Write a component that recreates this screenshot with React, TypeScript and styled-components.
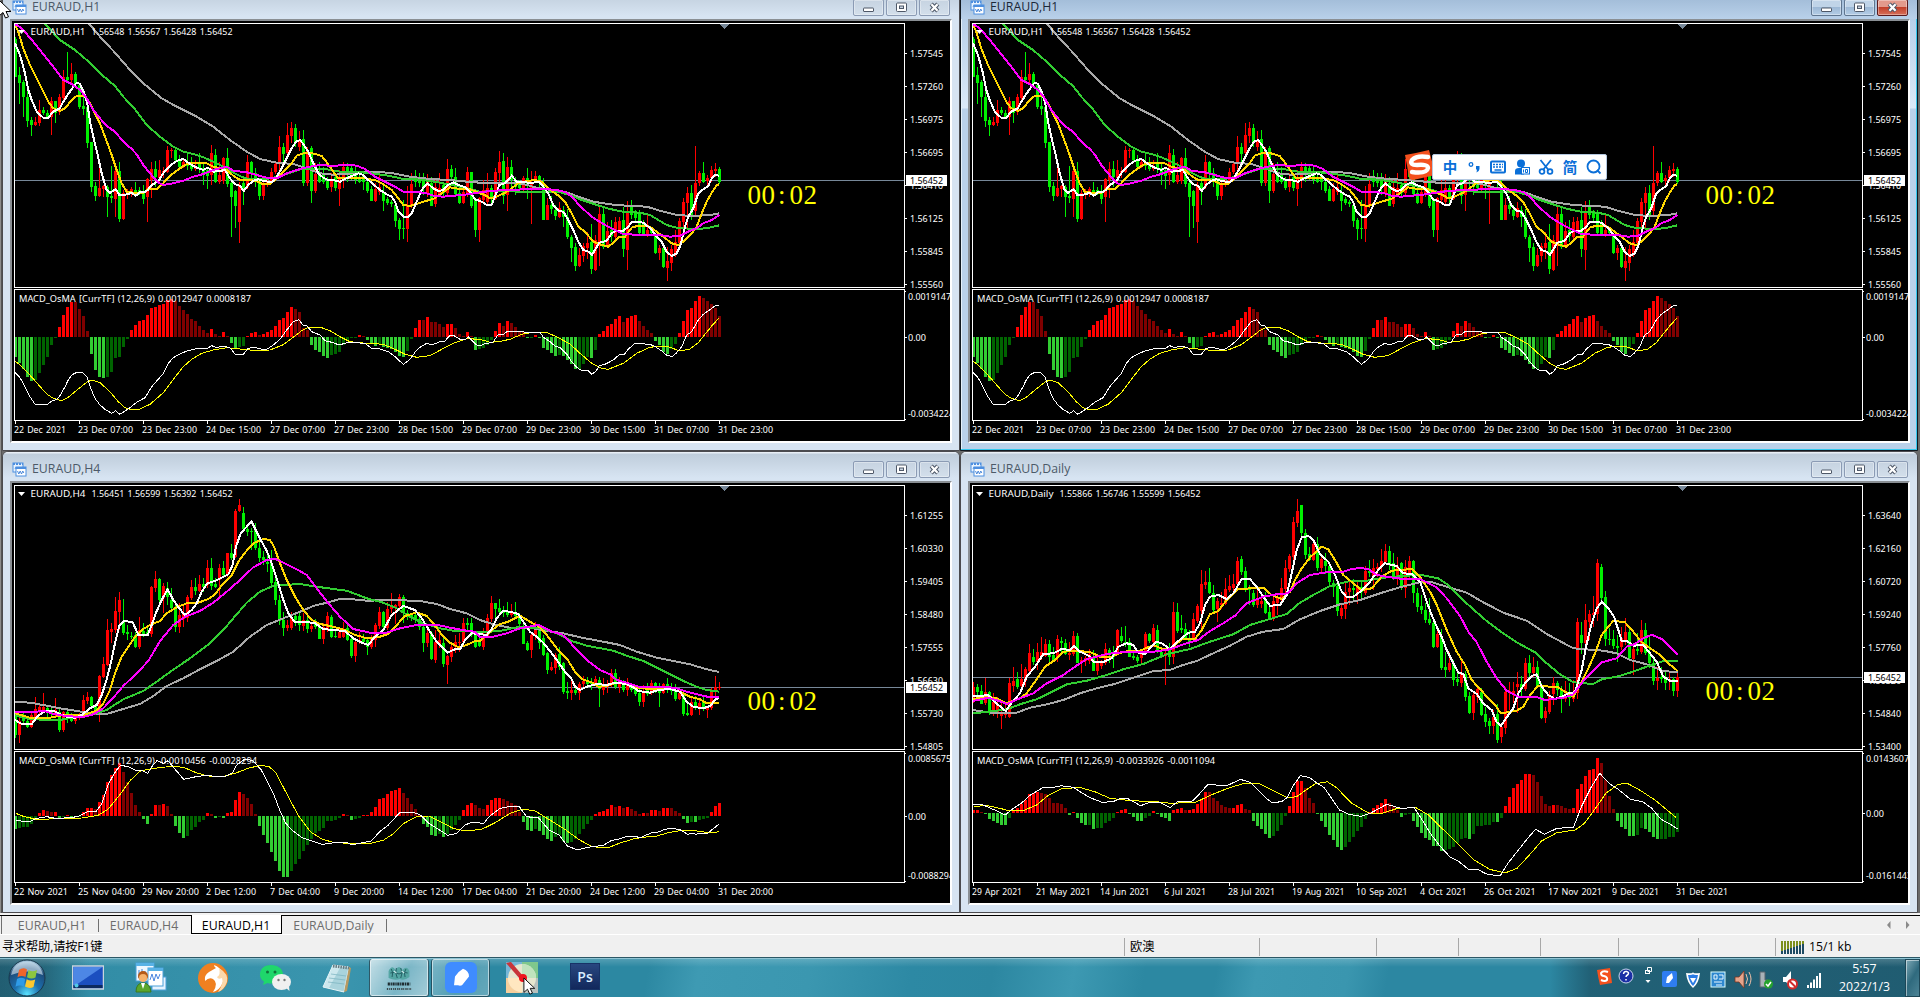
import React from 'react';
import styled, { createGlobalStyle, css } from 'styled-components';

/* ------------------------------------------------------------------ */
/* Chart data. Coordinates are stored in thirds of a pixel.            */
/* ------------------------------------------------------------------ */

/** One stretch of a line: x offset, x scale, then "x,y x,y ..." */
type Piece = [number, number, string];

interface Curve {
  color: string;
  width: number;
  pieces: Piece[];
}

interface ChartData {
  symbol: string;
  header: string;
  headerWidth: number;
  candles: string;
  yBase: number;
  curves: Curve[];
  osma: string;
  osmaZero: number;
  osmaBase: number;
  osmaLabel: string;
  osmaLabelWidth: number;
  osmaCurves: Curve[];
  prices: string[];
  priceY: number;
  timerY: number;
  osmaTop: string;
  osmaBottom: string;
  times: string[];
}

const GRAY = '#a9a9a9';
const GREEN = '#32cd32';
const MAGENTA = '#ff00ff';
const GOLD = '#ffd700';
const WHITE = '#ffffff';
const YELLOW = '#ffff00';

const line = (color: string, width: number, ...pieces: Piece[]): Curve => ({ color, width, pieces });

const H1: ChartData = {
  symbol: 'EURAUD,H1',
  header: '1.56548 1.56567 1.56428 1.56452',
  headerWidth: 141,
  yBase: 72,
  candles:
    'g110,118,230,232 g200,225,248,312 g240,247,290,352 g245,290,362,380 g350,360,375,408 r352,366,375,378 r300,330,368,378 g322,330,338,345 g330,338,350,357 r290,303,352,405 ' +
    'g302,304,338,370 r283,290,335,345 r210,232,293,300 g156,230,240,245 r188,222,240,250 g215,222,252,258 g250,255,320,328 g280,318,328,345 g295,322,430,445 g425,427,560,577 ' +
    'g545,558,587,602 r500,563,588,592 r556,558,568,590 g555,560,592,650 g498,588,594,608 r508,514,596,650 g485,514,656,665 r570,578,657,660 r566,575,582,598 r560,568,580,590 ' +
    'g545,570,580,590 g560,570,578,585 g555,575,596,612 r535,538,592,665 r485,508,540,593 g483,508,532,560 r480,510,535,545 r500,512,520,535 r438,450,515,520 r445,450,454,473 ' +
    'g445,450,480,490 g465,480,500,510 r475,485,498,505 g460,485,498,510 g470,495,506,512 r480,500,508,514 g460,490,508,518 g490,505,518,555 g500,510,528,567 r435,460,525,555 ' +
    'g447,464,545,550 r485,525,545,552 r470,475,542,552 g444,473,552,562 g540,550,590,711 g570,574,618,684 r545,556,665,729 g540,550,566,615 r465,487,560,567 g483,487,520,540 ' +
    'g505,518,545,560 g535,540,587,600 r540,552,588,600 r535,545,556,560 r505,515,545,552 r485,492,515,523 r408,440,492,515 g428,440,462,490 r369,405,460,470 r366,383,408,430 ' +
    'g372,383,425,440 r393,420,440,452 g390,418,548,558 r440,450,548,558 g437,444,573,608 r490,521,573,580 g485,518,545,550 g500,520,545,552 g530,542,565,570 r520,538,562,575 ' +
    'g520,530,565,572 r510,530,566,618 r485,500,540,565 g490,500,525,545 g497,505,530,540 g500,515,540,552 g520,530,545,550 g515,525,545,570 g535,545,572,578 g558,567,602,603 ' +
    'r550,567,603,607 r525,560,575,585 g555,575,602,633 g590,598,610,615 g600,605,612,620 g608,615,663,680 g655,660,687,720 g600,684,687,717 r557,618,687,726 r518,552,618,625 ' +
    'g510,538,545,560 g518,538,550,560 g520,535,560,585 r523,537,583,590 g530,550,617,618 r540,560,612,621 r520,563,583,590 g545,555,580,587 r477,507,578,590 g495,507,530,540 ' +
    'g503,530,583,590 g555,580,610,612 r565,576,610,612 r500,516,578,592 g515,517,618,625 g595,600,690,711 r590,595,690,726 r540,570,600,612 r518,565,605,615 g555,565,595,610 ' +
    'r505,516,598,600 r452,485,518,555 g458,483,588,612 r470,500,585,633 g480,500,540,560 g530,540,560,585 g540,548,565,572 r528,535,570,575 g503,533,555,597 r512,545,565,672 ' +
    'r513,528,540,550 g525,528,548,560 g535,555,660,660 r593,615,660,660 g588,615,627,642 g615,630,648,660 r605,625,650,655 g618,630,650,680 g628,650,710,718 g706,710,745,787 ' +
    'g730,742,798,812 r745,765,798,802 r730,737,768,787 r697,728,745,777 g672,725,808,822 r705,720,810,812 r618,643,738,797 g625,643,740,748 r665,692,735,740 g660,690,708,725 ' +
    'r650,666,710,720 r652,663,690,695 g620,660,748,771 r603,640,750,810 g600,620,645,658 g630,640,655,665 g630,640,700,708 g660,670,702,708 r645,690,708,712 g680,690,700,705 ' +
    'g698,705,758,763 r735,745,758,780 g735,745,800,804 r740,783,803,843 r735,748,788,812 r690,725,760,770 r655,663,730,745 r595,606,667,690 r560,580,608,690 g555,580,650,660 ' +
    'r438,550,632,650 r513,519,550,558 g487,519,545,550 r525,535,543,560 r497,510,535,545 r488,508,514,530 g500,507,545,552',
  curves: [
    line(GRAY, 2,
      [0, 1, '266,70 300,110 345,158 390,210 430,250 485,295 530,320 590,350 640,380 690,420 740,455 780,477 830,488 880,492 920,505 960,520 1000,524 1040,522 1070,517 1130,515 1180,520 1230,530 1290,537 1350,540 1400,545'],
      [1440, 1, '0,548 100,548 130,552 170,563 200,568 260,577 300,592 340,605 390,613 440,617 500,620 540,632 590,645 640,648 690,645 718,640']),
    line(GREEN, 2,
      [0, 1, '132,70 150,88 180,120 225,150 260,180 300,220 345,258 370,290 405,328 440,375 480,410 520,440 550,455 580,462 610,472 640,485 670,500 700,518 735,535 760,537 800,537 835,530 870,518 900,508 940,507 980,508 1020,515 1060,515 1100,518 1130,522 1170,528 1210,537 1250,538 1290,543 1330,550 1370,558 1410,567'],
      [1440, 1, '0,575 60,573 120,575 180,575 240,577 270,585 300,598 330,608 360,618 390,627 430,635 480,638 510,645 530,657 560,675 590,683 640,687 680,685 718,676']),
    line(GOLD, 2,
      [0, 1, '45,75 55,95 70,145 90,195 110,235 125,265 145,305 160,325 180,333 195,325 215,300 230,288 255,288 270,310 285,340 300,370 315,410 335,465 350,510 365,550 380,575 400,578 430,578 445,567 470,567 490,550 505,532 520,520 540,505 560,492 590,488 620,490 640,500 660,505 680,510 700,527 720,540 745,540 770,543 790,553 810,553 830,535 845,520 860,505 875,490 890,467 910,460 930,458 950,463 965,468 980,487 1000,515 1015,535 1040,535 1060,533 1085,533 1110,538 1130,542 1150,553 1175,570 1195,595 1210,615 1230,618 1255,610 1280,602 1300,597 1325,580 1350,562 1380,567 1410,568'],
      [1440, 1, '0,580 15,585 30,595 50,590 75,578 95,565 115,550 140,543 165,540 185,545 205,565 225,580 240,590 255,605 275,640 295,680 315,695 340,725 365,735 385,740 400,728 415,712 435,710 455,683 475,677 495,678 510,680 530,695 550,710 575,730 595,735 610,725 635,700 650,680 665,640 680,605 695,578 710,555 718,553']),
    line(WHITE, 2,
      [0, 1, '45,130 60,165 75,220 85,270 95,300 110,335 130,353 145,353 160,335 180,325 190,305 205,282 220,260 230,248 240,252 252,278 262,310 270,365 280,410 292,460 305,520 320,570 330,578 347,568 358,585 370,585 382,583 395,578 407,587 420,577 432,577 443,570 455,555 467,548 479,537 491,518 505,503 515,493 530,483 550,477 570,492 590,503 610,510 623,503 640,515 660,513 675,510 690,535 705,553 720,557 731,573 745,555 760,542 775,538 790,543 805,545 818,545 830,530 845,505 860,475 875,445 888,425 900,420 912,435 925,455 940,490 955,520 970,533 985,540 1000,540 1020,545 1035,537 1055,528 1075,520 1090,525 1105,540 1120,553 1140,570 1160,583 1175,590 1185,605 1195,635 1210,650 1222,652 1235,640 1250,605 1265,570 1282,550 1300,565 1315,573 1330,570 1345,555 1360,547 1375,555 1395,562 1410,575 1425,598'],
      [1440, 1, '5,605 20,615 35,614 45,590 58,555 75,550 95,527 110,545 130,545 150,550 175,545 190,560 205,580 220,615 235,632 250,635 265,660 280,690 295,725 310,750 325,755 335,765 345,750 358,728 380,722 395,700 410,692 430,692 445,680 455,667 470,665 490,668 505,680 515,690 530,710 545,725 560,755 575,768 590,760 600,740 607,715 615,680 625,650 640,625 655,580 670,568 685,558 695,535 705,525 718,527']),
    line(MAGENTA, 2,
      [0, 1, '45,72 65,85 100,125 130,163 160,200 190,240 215,252 240,270 260,295 280,330 300,355 320,378 345,395 370,425 395,447 410,463 430,495 450,520 475,548 490,555 520,550 550,542 580,530 610,522 640,510 680,500 700,512 740,517 770,525 800,533 830,535 860,520 890,510 920,502 960,495 1000,498 1040,494 1070,497 1095,507 1125,530 1155,545 1185,560 1210,575 1250,577 1275,578 1300,587 1330,590 1360,587 1385,585 1410,582'],
      [1440, 1, '0,577 40,572 90,570 150,567 200,567 240,572 260,578 280,595 300,618 335,650 370,672 400,688 430,702 480,705 540,705 570,710 600,707 620,697 650,685 670,670 695,660 718,645']),
  ],
  osmaZero: 47,
  osmaBase: 30,
  osma:
    '-60 -77 -96 -120 -132 -129 -108 -84 -60 -24 -3 30 66 90 105 104 84 63 18 -51 -99 -120 -123 -120 -105 -63 -60 -30 -6 21 36 48 51 66 87 90 96 99 111 114 108 93 81 69 54 48 33 21 12 24 9 3 15 3 -17 -34 -30 -27 3 12 15 6 9 15 21 33 51 57 75 90 84 75 27 21 -24 -39 -45 -57 -63 -54 -51 -45 -24 -12 -3 -3 6 3 -9 -21 -27 -21 -29 -33 -36 -45 -57 -60 -42 -6 27 51 50 60 45 44 39 30 39 39.5 27 9 3 15 3 -39 -36 -33 -24 -9 18 42 33 48 42 30 18 15 -3 -3 6 -2 -33 -39 -48 -57 -54 -57 -69 -81 -96 -95 -81 -60 -63 -39 9 18 33 39 54 63 45 57 63 66 48 33 21 12 -12 -24 -45 -51 -36 -21 12 48 81 87 108 123 117 108 99 87 63',
  osmaLabel: '0.0012947 0.0008187',
  osmaLabelWidth: 232,
  osmaCurves: [
    line(YELLOW, 1,
      [0, 1, '45,243 60,255 85,280 110,308 140,342 160,355 185,362 205,352 235,327 262,305 278,300 300,308 330,335 355,365 375,383 395,390 420,387 450,373 490,338 520,298 550,260 575,238 605,220 640,210 680,203 720,207 760,211 810,210 850,194 880,172 905,152 925,142 965,143 990,152 1020,170 1050,185 1090,189 1150,193 1185,208 1215,223 1250,232 1290,227 1325,208 1360,190 1400,176'],
      [1440, 1, '0,178 30,187 55,185 90,178 125,163 160,157 200,157 235,173 270,192 300,220 335,250 365,265 385,268 430,250 470,220 505,204 530,198 565,200 600,213 630,207 655,188 675,163 695,138 718,113']),
    line(WHITE, 1,
      [0, 1, '45,278 60,293 75,320 90,350 105,373 142,373 155,363 170,358 180,347 195,320 205,300 215,285 230,277 248,278 262,292 272,325 285,355 300,375 315,388 335,400 347,392 359,403 375,393 390,383 410,367 435,353 455,320 470,303 488,283 505,250 520,233 540,222 560,213 590,206 620,206 635,197 650,203 670,198 690,203 705,222 730,223 745,205 765,202 785,208 800,208 820,195 840,178 860,150 880,125 897,119 908,135 920,137 935,155 960,165 975,182 995,187 1018,195 1040,188 1065,188 1095,190 1115,205 1140,207 1165,215 1185,230 1210,253 1230,238 1245,217 1258,203 1280,190 1295,195 1320,185 1335,183 1348,168 1362,167 1380,178 1395,180 1405,170 1420,185 1430,195'],
      [1440, 1, '0,197 18,190 38,188 55,163 70,163 82,154 125,154 145,159 165,156 180,156 190,172 210,185 225,198 240,203 262,225 275,245 290,262 305,272 323,270 335,283 348,273 358,257 375,253 400,240 420,222 432,224 445,208 462,192 490,191 520,196 545,213 562,227 578,229 590,218 605,200 620,165 635,155 655,120 670,103 690,89 708,76 718,76']),
  ],
  prices: ['1.57545', '1.57260', '1.56975', '1.56695', '1.56410', '1.56125', '1.55845', '1.55560'],
  priceY: 156,
  timerY: 180,
  osmaTop: '0.0019147',
  osmaBottom: '-0.0034224',
  times: ['22 Dec 2021', '23 Dec 07:00', '23 Dec 23:00', '24 Dec 15:00', '27 Dec 07:00', '27 Dec 23:00', '28 Dec 15:00', '29 Dec 07:00', '29 Dec 23:00', '30 Dec 15:00', '31 Dec 07:00', '31 Dec 23:00'],
};

const H4: ChartData = {
  symbol: 'EURAUD,H4',
  header: '1.56451 1.56599 1.56392 1.56452',
  headerWidth: 141,
  yBase: 18,
  candles:
    'g700,705,765,773 r705,722,765,789 g700,715,722,735 g712,722,740,743 r698,705,740,743 r650,688,710,718 r675,680,690,705 r640,682,690,700 g680,685,700,715 g685,692,700,712 ' +
    'r655,690,705,712 g680,695,750,755 r693,697,750,755 g683,697,715,728 g700,705,722,725 r705,712,722,732 r700,706,715,720 r645,660,700,705 r636,650,662,672 g648,652,678,685 ' +
    'g672,676,690,705 r585,588,690,725 r530,552,590,595 r418,450,555,557 r430,447,455,490 r350,393,450,458 r336,360,395,450 g357,425,458,465 g435,455,462,480 g455,467,472,478 ' +
    'g455,465,500,505 r410,450,500,507 g430,452,462,470 g445,455,463,468 r318,322,462,470 r273,297,323,335 g295,297,360,365 r308,318,355,400 g305,323,350,375 g325,360,385,390 ' +
    'g370,383,440,455 r370,405,440,460 r375,400,418,440 r345,350,415,425 r300,322,353,360 g295,320,333,345 r285,312,333,337 g295,312,320,335 r240,264,315,325 g235,264,318,330 ' +
    'g295,313,320,325 r252,265,300,350 g242,265,285,295 r218,220,285,290 g192,219,233,240 r88,92,230,235 r57,76,93,97 g82,98,148,155 g140,148,155,168 g145,152,156,210 ' +
    'g128,150,203,210 g180,203,235,245 g212,230,240,255 g225,245,252,275 g210,248,308,315 g295,305,360,375 g345,360,423,435 g395,420,445,467 r420,435,443,453 r395,410,443,450 ' +
    'g400,408,420,438 g393,407,435,453 r400,420,437,452 g410,420,447,460 r430,438,447,455 g418,432,440,448 g432,440,476,478 r430,440,477,492 r397,408,450,455 g405,410,470,475 ' +
    'g450,468,472,475 r448,455,473,475 r425,450,470,475 g436,445,480,482 g470,478,528,533 r475,485,528,545 r455,480,487,492 g462,478,487,490 g470,480,500,525 r465,475,502,507 ' +
    'r430,435,480,500 r380,395,438,448 g393,395,440,450 r365,388,445,450 r340,380,388,400 r372,376,385,432 r342,350,378,390 g346,350,400,430 g390,400,408,420 g398,405,412,422 ' +
    'g388,405,418,430 g395,418,440,450 g425,440,488,515 r440,460,488,500 g453,460,538,540 r450,487,540,548 r450,480,492,505 g475,490,552,560 r525,528,555,612 r490,500,530,545 ' +
    'r465,487,500,520 r458,485,490,515 r415,428,487,495 g413,430,435,455 g415,430,465,470 g455,463,500,505 g475,485,498,500 r445,470,500,510 r403,415,470,475 r348,370,418,425 ' +
    'g370,370,388,418 g358,385,397,405 g378,390,400,410 g367,393,405,410 r372,395,405,410 g366,395,408,412 g400,405,432,450 g430,440,492,493 g483,488,510,513 r455,465,510,533 ' +
    'r425,445,465,480 g435,448,490,508 g465,475,525,527 g515,520,570,581 r545,562,570,572 r518,525,563,581 g500,523,560,570 g545,550,635,642 g605,632,638,656 r600,630,640,660 ' +
    'g623,630,640,645 r605,612,638,660 r588,602,613,628 g590,605,612,622 g595,605,613,630 r588,598,613,618 g590,600,628,681 r595,622,630,645 r600,612,622,640 r567,578,612,620 ' +
    'g567,578,622,628 r590,610,622,640 g600,610,630,637 r595,615,630,648 g608,612,630,635 g615,625,642,648 g625,638,665,678 r615,640,665,681 g610,630,643,648 r600,608,640,645 ' +
    'g605,610,625,640 g610,630,640,681 r610,612,640,643 g593,612,630,640 g610,620,632,645 g612,630,658,663 r630,640,658,660 g635,645,702,707 g670,700,706,708 r655,665,705,707 ' +
    'g648,665,685,690 r655,668,685,705 g645,665,688,692 r680,685,690,714 r625,630,685,690 r588,622,632,650 r605,620,624,630',
  curves: [
    line(GRAY, 2,
      [0, 1, '45,665 90,668 130,675 180,685 230,693 270,700 320,702 370,687 420,672 460,648 500,618 550,595 600,568 650,543 700,515 750,470 800,435 850,415 900,395 940,378 980,368 1020,357 1060,358 1100,362 1180,360 1260,363 1310,372 1350,387 1400,400'],
      [1440, 1, '0,420 40,433 90,443 150,443 200,453 250,460 300,472 370,485 420,495 470,515 530,533 580,543 630,553 680,568 718,576']),
    line(GREEN, 2,
      [0, 1, '45,706 90,718 180,720 220,712 290,700 320,690 370,658 430,633 470,605 515,572 570,535 630,490 670,450 700,415 740,368 780,335 820,317 900,312 950,320 1000,327 1040,332 1100,355 1150,368 1190,385 1230,410 1270,430 1320,445 1360,452 1400,452'],
      [1440, 1, '0,457 60,453 110,442 180,443 230,460 275,483 320,497 400,512 440,527 490,543 530,563 570,583 610,603 650,620 680,630 718,635']),
    line(GOLD, 2,
      [0, 1, '45,700 90,713 140,715 190,705 250,705 290,692 310,670 330,630 345,580 365,530 385,500 405,470 425,450 450,435 480,423 500,400 530,382 565,368 595,368 625,357 645,343 670,310 695,285 715,245 735,218 760,190 790,177 810,180 822,200 840,250 860,300 885,350 910,390 935,420 960,432 1000,440 1035,450 1060,463 1100,475 1140,470 1165,462 1190,435 1215,408 1250,397 1280,408 1300,430 1330,470 1350,488 1375,502 1400,495 1425,483'],
      [1440, 1, '0,483 20,465 40,447 60,432 85,425 120,407 150,425 180,442 200,465 230,505 260,535 285,575 305,597 335,607 355,620 380,618 410,608 440,612 480,625 530,627 570,627 600,635 630,650 660,658 680,670 718,668']),
    line(WHITE, 2,
      [0, 1, '45,720 65,732 95,733 110,712 130,695 160,692 180,702 200,710 225,713 245,705 270,685 290,675 305,645 318,605 330,560 345,490 358,438 372,422 398,427 415,465 443,465 455,435 467,400 485,360 503,328 520,360 540,388 555,405 575,390 590,370 605,335 622,310 645,303 665,293 685,283 697,258 708,200 722,160 740,140 755,125 770,155 785,185 800,212 815,250 835,310 850,360 865,400 885,427 915,425 945,430 970,447 1000,450 1035,453 1060,475 1085,488 1105,495 1125,470 1150,450 1175,405 1210,378 1245,390 1265,415 1290,455 1310,485 1342,518 1365,508 1380,508 1395,480 1415,460'],
      [1440, 1, '0,462 20,465 35,447 50,415 68,393 90,395 115,402 130,425 150,455 170,470 190,488 210,513 230,540 255,575 272,592 285,620 300,630 320,620 350,612 380,615 405,608 440,612 460,622 475,633 510,638 535,630 570,627 600,635 620,665 640,680 670,685 690,678 705,660 718,652']),
    line(MAGENTA, 2,
      [0, 1, '45,695 100,697 130,692 160,702 200,708 245,712 280,703 310,685 340,653 370,618 410,580 445,543 480,483 520,435 555,410 600,393 640,368 680,335 720,300 760,262 800,240 825,236 850,248 890,268 920,285 950,325 985,370 1020,410 1060,447 1110,458 1160,458 1200,445 1250,435 1310,434 1350,443 1400,452 1425,455'],
      [1440, 1, '0,470 40,470 80,460 120,445 175,435 215,455 245,463 265,480 285,505 320,540 360,570 390,583 410,600 440,608 475,620 520,620 555,620 590,625 620,635 660,645 690,652 718,651']),
  ],
  osmaZero: 64,
  osmaBase: 36,
  osma:
    '-39 -36 -33 -32 -24 -6 9 18 15 12 12 -9 -3 3 -3 -4 -3 12 24 24.1 21 42 63 102 123 144 159 132 102 69 33 12 -9 -24 6 33 32 36 30 6 -30 -51 -66 -60 -42 -33 -18 -12 9 6 -6 -3 -6 9 12 48 72 66 54 36 6 -30 -57 -81 -108 -135 -165 -183 -183.1 -165 -144 -129 -105 -87 -69 -51 -45 -36 -15 -15 -12 -6 6 2 -12 -9 -5 3 3 12 27 51 54 66 75 78 84 69 54 36 21 3 -24 -33 -57 -60 -54 -63 -54 -42 -27 -12 18 33 39 33 24 21 33 48 54 55 51 45 39 33 12 -18 -42 -45 -39 -45 -57 -69 -75 -63 -57 -75 -81 -78 -69 -54 -39 -24 -12 6 12 15 21 33 27 30 24 27 20 15 6 9 8 18 18 15 24 24 23 15 9 -9 -21 -17 -18 -11 -10 -6 12 30 39',
  osmaLabel: '-0.0010456 -0.0028294',
  osmaLabelWidth: 238,
  osmaCurves: [
    line(YELLOW, 1,
      [0, 1, '47,220 73,230 110,238 184,236 245,234 294,226 324,208 355,170 392,120 422,92 465,85 514,79 551,82 588,98 624,108 673,109 710,98 747,84 784,76 808,80 827,98 857,155 894,225 931,275 967,298 1004,308 1053,310 1114,310 1151,300 1182,280 1212,250 1249,230 1286,228 1322,245 1359,265 1396,273 1445,268 1482,250 1531,220 1567,208 1604,212 1641,235 1690,265 1739,300 1776,320'],
      [1800, 1, '0,322 30,321 60,309 100,297 130,292 170,288 205,278 245,271 290,273 320,277 350,277 357,273']),
    line(WHITE, 1,
      [0, 1, '47,241 86,246 110,235 141,230 171,236 233,230 263,215 288,215 306,190 324,135 343,100 361,76 386,80 410,92 422,90 443,100 459,75 471,62 490,70 504,62 527,90 551,118 588,110 624,105 649,111 673,110 698,98 710,75 735,57 759,62 784,90 802,125 820,160 839,210 857,250 876,270 906,293 943,305 967,313 1004,308 1035,306 1056,314 1078,310 1114,303 1139,275 1163,257 1200,217 1243,218 1261,225 1286,250 1322,272 1343,286 1371,280 1396,255 1414,247 1451,250 1469,228 1500,205 1537,198 1558,200 1580,230 1616,234 1647,270 1678,285 1702,318 1733,330 1763,322'],
      [1800, 1, '0,317 12,315 33,302 60,296 80,289 105,289 120,293 155,278 175,276 195,268 215,265 240,269 263,283 275,280 288,283 300,280 322,280 335,270 357,252']),
  ],
  prices: ['1.61255', '1.60330', '1.59405', '1.58480', '1.57555', '1.56630', '1.55730', '1.54805'],
  priceY: 201,
  timerY: 224,
  osmaTop: '0.0085675',
  osmaBottom: '-0.0088294',
  times: ['22 Nov 2021', '25 Nov 04:00', '29 Nov 20:00', '2 Dec 12:00', '7 Dec 04:00', '9 Dec 20:00', '14 Dec 12:00', '17 Dec 04:00', '21 Dec 20:00', '24 Dec 12:00', '29 Dec 04:00', '31 Dec 20:00'],
};

const DAILY: ChartData = {
  symbol: 'EURAUD,Daily',
  header: '1.55866 1.56746 1.55599 1.56452',
  headerWidth: 141,
  yBase: 18,
  candles:
    'r605,620,655,668 g612,622,635,650 g615,633,672,672 r593,635,668,675 g632,636,700,705 r640,665,690,707 r652,672,695,715 r660,697,708,747 r672,697,705,714 r593,608,710,714 ' +
    'r560,602,617,635 g575,597,620,628 r552,597,618,622 r560,568,602,620 r492,520,572,578 g507,530,545,555 r490,517,545,570 r470,515,527,540 r477,492,528,530 g480,492,530,545 ' +
    'g500,525,540,545 r465,476,535,545 g470,483,490,515 g478,488,523,525 r485,520,524,540 r453,467,523,528 g460,467,548,550 r530,540,547,578 r528,535,543,558 r508,522,543,552 ' +
    'g510,530,572,573 r530,545,572,585 r540,550,558,567 r490,507,550,555 g503,510,522,550 g497,515,530,565 r447,450,520,525 g440,468,483,490 g438,485,490,500 g475,487,530,532 ' +
    'g510,527,533,540 g525,530,543,550 r515,520,535,552 r455,462,520,525 g460,462,483,490 r432,445,485,500 g435,450,515,518 g500,515,527,530 r505,520,527,615 g490,510,530,555 ' +
    'r366,396,530,552 g370,396,453,460 g405,445,450,460 g428,447,475,480 g450,475,485,500 r400,418,475,482 r373,378,422,430 r270,312,393,455 r273,307,315,328 g264,307,340,342 ' +
    'g315,340,390,398 r353,363,388,425 r337,370,375,388 r293,328,372,375 r285,318,330,335 r283,312,325,345 r232,243,313,318 g228,237,275,285 g262,272,325,335 g315,325,330,375 ' +
    'g330,340,375,380 r320,358,375,385 r345,362,373,383 g335,360,398,402 g375,397,415,418 r350,363,415,422 r340,350,370,405 r295,325,355,370 r240,264,327,340 r222,228,267,275 ' +
    'r110,126,230,265 r57,94,130,140 g75,76,160,175 g147,160,225,238 g200,223,240,243 r182,192,240,243 g170,192,263,272 r222,238,263,278 g218,242,258,282 g245,258,305,318 ' +
    'g300,310,322,350 g315,318,393,408 r370,383,407,417 r310,335,387,417 r300,325,335,375 g297,325,330,360 r305,318,340,372 g300,320,337,355 r258,272,338,345 g240,272,280,290 ' +
    'r237,265,290,330 r250,260,268,290 r208,243,258,275 r192,213,245,250 g198,213,253,270 g218,250,290,300 r232,258,288,315 g245,250,325,330 r240,262,325,354 r228,243,285,293 ' +
    'g240,243,340,370 g325,340,380,397 g345,377,390,403 g370,390,420,428 g355,418,430,435 g425,430,502,503 r450,462,502,505 g448,470,565,570 g515,560,570,593 r515,550,570,575 ' +
    'g540,550,600,617 g575,598,605,617 r543,580,608,622 g573,582,650,662 g635,647,698,702 r640,645,698,720 r620,628,650,668 g625,637,705,708 g680,703,725,740 g715,722,738,762 ' +
    'r690,710,738,762 g672,703,780,789 r735,740,770,789 r620,635,745,762 r605,633,640,690 r605,632,645,670 r577,612,622,700 g588,612,628,650 r535,550,628,632 g525,550,580,595 ' +
    'r530,562,580,590 g543,560,620,625 g610,615,713,717 r680,693,715,729 r633,645,697,703 r590,610,643,675 g602,610,630,648 g617,630,655,699 r603,650,658,665 g610,643,655,678 ' +
    'r600,645,658,665 r413,426,640,658 g425,465,488,522 r372,420,490,495 r390,402,425,480 r348,400,405,440 r237,249,402,423 g252,260,355,360 g333,350,477,498 g445,477,480,495 ' +
    'g450,477,498,508 g465,498,503,545 r440,475,500,510 r415,457,480,495 g440,455,535,537 r490,507,537,585 g460,507,513,525 r420,450,515,522 g430,450,520,525 g472,518,550,565 ' +
    'g537,550,603,615 r560,595,603,630 g560,592,598,608 g577,598,608,630 r580,597,603,630 g590,597,632,648 r578,592,632,650',
  curves: [
    line(GRAY, 2,
      [6, 1, '38,690 100,699 170,698 210,683 260,673 310,660 360,640 410,625 460,613 520,593 580,573 630,570 660,558 710,543 760,520 810,497 860,470 910,455 970,447 1020,418 1080,393 1140,373 1200,360 1260,340 1320,322 1380,307'],
      [1416, 1, '0,305 50,320 110,338 160,367 220,398 290,422 350,462 430,505 520,512 560,520 600,540 650,553 700,573 743,577']),
    line(GREEN, 2,
      [6, 1, '38,700 80,696 140,688 180,673 230,658 270,638 320,613 380,602 430,588 490,568 550,552 620,523 690,507 750,485 820,463 870,435 930,417 980,402 1020,368 1060,345 1110,318 1170,303 1220,302 1270,293 1330,288 1380,284'],
      [1416, 1, '0,290 25,295 55,315 90,352 130,388 170,423 215,457 260,487 315,517 350,550 390,583 430,607 490,612 515,598 560,590 600,578 650,560 700,543 743,543']),
    line(GOLD, 2,
      [6, 1, '38,657 80,650 110,655 137,670 180,655 200,640 225,605 255,560 285,540 310,515 345,512 390,516 420,530 450,532 490,515 540,512 580,495 610,508 635,505 665,478 705,477 725,450 750,403 775,393 800,360 835,327 910,323 935,345 965,357 990,335 1005,300 1025,265 1050,232 1085,200 1105,208 1125,240 1150,285 1180,310 1205,330 1235,325 1265,290 1295,272 1355,267 1380,290'],
      [1416, 1, '0,335 20,375 50,450 80,515 105,555 125,600 150,627 175,655 195,675 213,700 260,692 280,680 300,645 325,617 385,622 405,635 430,650 450,615 475,565 495,520 515,465 550,422 585,427 610,455 635,487 665,508 690,525 715,550 743,573']),
    line(WHITE, 2,
      [6, 1, '38,648 60,648 85,645 100,660 115,675 137,693 155,668 180,640 200,590 225,560 250,522 280,520 305,507 330,510 342,497 360,515 388,528 400,545 430,546 455,535 475,500 500,490 520,495 535,518 555,522 570,505 590,485 610,492 628,508 655,483 685,458 705,455 720,430 735,375 750,350 775,345 800,357 820,340 845,297 870,298 890,320 910,350 930,377 960,375 980,345 995,280 1010,210 1025,172 1045,168 1060,180 1080,222 1105,245 1125,285 1145,335 1160,352 1180,350 1200,335 1230,305 1255,270 1275,250 1310,258 1330,280 1355,282 1380,305 1400,365'],
      [1416, 1, '5,405 20,440 35,470 50,510 65,540 85,578 100,582 115,625 140,642 160,670 185,690 200,727 213,737 230,712 250,685 265,640 285,610 305,588 320,583 335,620 355,645 375,657 400,648 415,640 435,637 455,570 468,500 485,430 500,385 515,365 535,385 552,410 565,450 575,483 590,482 610,497 640,495 660,520 680,545 700,590 720,602 743,603']),
    line(MAGENTA, 2,
      [6, 1, '38,663 85,653 115,662 140,672 180,655 220,640 260,610 305,588 345,560 380,537 440,522 500,515 570,517 630,508 670,493 715,480 750,453 790,430 825,407 860,370 910,350 950,343 985,340 1010,310 1050,285 1110,275 1150,275 1175,267 1200,264 1225,267 1250,285 1290,292 1330,297 1380,297'],
      [1416, 1, '0,312 20,322 50,355 90,408 115,455 140,487 170,545 200,595 230,632 265,650 320,651 345,660 400,653 430,643 460,603 490,572 515,547 560,535 590,500 615,492 640,475 665,464 695,477 720,500 743,525']),
  ],
  osmaZero: 61,
  osmaBase: 36,
  osma:
    '9 9 3 -2 -18 -24 -30 -36 -36.1 -15 9 15 27 39 57 60 62 61 57 45 30 29 27 15 -5 3 -15 -30 -36 -36 -48 -45 -45 -30 -24 -15 3 9 12 -2 -12 -24 -24.1 -15 -9 6 -3 -11 -15 -24 9 12 15 9 9 12 27 39 63 62 45 36 24 18 15 15 24 27 12 9 -24 -39 -48 -63 -75 -69 -54 -36 -9 21 63 96 96 75 45 30 -3 -24 -42 -66 -81 -102 -111 -102 -87 -72 -54 -42 -18 3 15 24 30 42 30 21 9 -12 -6 -3 -24 -42 -60 -75 -81 -99 -99.1 -114 -111 -108 -102 -90 -78 -75 -78 -63 -39 -39 -36 -36 -27 -28 -15 21 48 75 87 99 117 117 114 93 51 27 21 24 23 21 15 12 15 72 87 111 129 132 165 150 99 51 12 -24 -42 -48 -69 -69.1 -66 -45 -48 -57 -72 -78 -78 -78 -72 -72 -57',
  osmaLabel: '-0.0033926 -0.0011094',
  osmaLabelWidth: 238,
  osmaCurves: [
    line(YELLOW, 1,
      [6, 1.8367, '22,199 45,197 65,205 80,212 105,211 125,195 145,165 165,147 195,142 220,155 245,175 280,182 320,185 345,190 385,187 410,165 440,143 465,130 490,132 510,150 535,173 550,170 565,150 580,132 600,125 615,143 640,190 670,222 690,220 715,205 745,203 765,225 790,270 815,315 840,360 865,388 890,399 910,385 930,345 950,303 975,278 1005,270 1020,250 1040,200 1055,160 1075,133 1090,130 1110,150 1135,180 1155,210 1170,233']),
    line(WHITE, 1,
      [6, 1.8367, '22,193 38,195 50,205 60,212 74,225 85,208 100,190 115,165 135,143 150,143 165,137 185,142 200,160 215,175 232,187 250,185 262,175 275,177 295,197 310,187 325,186 343,203 355,185 380,183 392,160 405,133 435,138 458,118 475,128 490,155 500,175 510,188 525,185 535,172 545,135 556,107 570,112 580,125 595,143 605,170 620,210 635,223 655,229 670,220 685,205 697,193 720,205 742,203 755,240 770,285 785,320 800,350 815,365 832,390 845,388 860,402 882,408 895,370 910,335 925,300 940,268 955,283 975,265 1002,262 1015,200 1030,145 1045,100 1060,130 1075,148 1095,178 1115,185 1130,205 1145,238 1160,252 1172,267']),
  ],
  prices: ['1.63640', '1.62160', '1.60720', '1.59240', '1.57760', '1.56320', '1.54840', '1.53400'],
  priceY: 191,
  timerY: 214,
  osmaTop: '0.0143607',
  osmaBottom: '-0.0161443',
  times: ['29 Apr 2021', '21 May 2021', '14 Jun 2021', '6 Jul 2021', '28 Jul 2021', '19 Aug 2021', '10 Sep 2021', '4 Oct 2021', '26 Oct 2021', '17 Nov 2021', '9 Dec 2021', '31 Dec 2021'],
};

/* ------------------------------------------------------------------ */
/* Drawing helpers                                                     */
/* ------------------------------------------------------------------ */

const curvePoints = (curve: Curve, base: number) =>
  curve.pieces
    .flatMap(([dx, sx, text]) =>
      text.split(' ').map((pair) => {
        const [x, y] = pair.split(',').map(Number);
        return `${((x * sx + dx - 45) / 3).toFixed(1)},${((y - base) / 3).toFixed(1)}`;
      }),
    )
    .join(' ');

const candleShapes = (text: string, base: number) => {
  const out = { r: '', g: '' };
  text.split(' ').forEach((item, i) => {
    const side = item[0] as 'r' | 'g';
    const [hi, top, bottom, lo] = item.slice(1).split(',').map((v) => Math.round((Number(v) - base) / 3));
    const x = i * 4;
    const height = Math.max(1, bottom - top);
    out[side] += `M${x} ${hi}h1v${Math.max(1, lo - hi)}h-1zM${x - 1} ${top}h3v${height}h-3z`;
  });
  return out;
};

const osmaShapes = (text: string, zero: number) => {
  const out: Record<string, string> = { '#ff0000': '', '#800000': '', '#32cd32': '', '#006400': '' };
  const values = text.split(' ').map(Number);
  values.forEach((v, i) => {
    const prev = i ? values[i - 1] : v > 0 ? v - 1 : v + 1;
    const color = v > 0 ? (v >= prev ? '#ff0000' : '#800000') : v < prev ? '#32cd32' : '#006400';
    const h = Math.max(1, Math.round(Math.abs(v) / 3));
    const y = v > 0 ? zero - h : zero;
    out[color] += `M${i * 4 - 1} ${y}h3v${h}h-3z`;
  });
  return out;
};

const MONTH_WIDTH: Record<string, number> = { Dec: 16, Nov: 18, Apr: 14, May: 18.5, Jun: 13.6, Jul: 11, Aug: 16.6, Sep: 15.4, Oct: 15.5 };
const dateWidth = (text: string) => {
  const [day, month, rest] = text.split(' ');
  return day.length * 5 + 6 + MONTH_WIDTH[month] + (rest.includes(':') ? 23 : 20);
};

/* ------------------------------------------------------------------ */
/* Styles                                                              */
/* ------------------------------------------------------------------ */

const GlobalStyle = createGlobalStyle`
  * { box-sizing: border-box; }
  body { margin: 0; background: #808080; overflow: hidden; }
  svg { display: block; flex: none; }
`;

const UI_FONT = "'Open Sans', 'Noto Sans', 'Noto Sans CJK SC', sans-serif";
const CHART_FONT = "'Noto Sans', 'DejaVu Sans', sans-serif";

const Screen = styled.div`
  position: relative;
  width: 1920px;
  height: 997px;
  display: flex;
  flex-direction: column;
  overflow: hidden;
  font-family: ${UI_FONT};
`;

const Workspace = styled.main`
  height: 915px;
  flex: none;
  display: grid;
  grid-template-columns: 958px 958px;
  grid-template-rows: 462px 462px;
  padding-left: 2px;
  align-content: end;
  border-bottom: 2px solid #f4f4f4;
  background: linear-gradient(90deg, #8c8c8c 0 1px, #555 1px 2px, #6a6a6a 2px);
  overflow: hidden;
`;

const Frame = styled.section<{ $active?: boolean }>`
  display: flex;
  flex-direction: column;
  border: 1px solid ${(p) => (p.$active ? '#101820' : '#4b4b4f')};
  border-radius: 6px 6px 0 0;
  padding: 0 7px 7px;
  overflow: hidden;
  background: #d7e4f2;
  ${(p) =>
    p.$active &&
    css`
      background: linear-gradient(180deg, #99b4d1 0, #b9d1ea 32px, #dbe9f8 118px, #b9d1ea 119px);
      box-shadow: inset -1px -1px 0 #35c8ee, inset 1px 0 0 #e4f0fa;
    `}
`;

const TitleBar = styled.header<{ $active?: boolean }>`
  height: 29px;
  flex: none;
  display: flex;
  align-items: center;
  margin: 0 -7px;
  padding: 5px 9px 0 9px;
  background: ${(p) => (p.$active ? 'linear-gradient(180deg, #99b4d1 0, #b9d1ea 100%)' : 'linear-gradient(180deg, #e8eef5 0 1px, #bfcddb 2px, #d7e4f2 26px)')};
`;

const TitleText = styled.span<{ $active?: boolean }>`
  flex: 1;
  margin-left: 5px;
  font-size: 12.3px;
  line-height: 16px;
  color: ${(p) => (p.$active ? '#1b2838' : '#4c5a68')};
  white-space: pre;
`;

const Buttons = styled.div`
  display: flex;
  gap: 2px;
`;

const WindowButton = styled.span<{ $tone: 'plain' | 'active' | 'close' }>`
  width: 31px;
  height: 17px;
  display: flex;
  align-items: center;
  justify-content: center;
  border: 1px solid #8b9bb4;
  border-radius: 2px;
  box-shadow: inset 0 0 0 1px rgba(255, 255, 255, 0.35);
  background: linear-gradient(180deg, #c6d3e1, #d3dfeb);
  ${(p) =>
    p.$tone === 'active' &&
    css`
      border-color: #5f7690;
      background: linear-gradient(180deg, #c0d4e8 0 45%, #9db9d6 50%, #b4cde6);
    `}
  ${(p) =>
    p.$tone === 'close' &&
    css`
      border-color: #5b1a1d;
      background: linear-gradient(180deg, #e39a8c 0 45%, #c3402a 50%, #d6705a);
    `}
`;

const Client = styled.div`
  flex: 1;
  display: grid;
  grid-template-columns: 891px 1fr;
  grid-template-rows: 265px 132px 1fr;
  row-gap: 1px;
  padding: 2px 0 0 2px;
  border: 2px solid;
  border-color: #8a8f94 #fff #fff #8a8f94;
  background: #000;
  overflow: hidden;
  text {
    font-family: ${CHART_FONT};
    word-spacing: 1px;
  }
`;

const Pane = styled.div`
  border: 1px solid #fff;
  overflow: hidden;
`;

const Axis = styled.div`
  overflow: hidden;
  grid-column: 2;
`;

const TimeAxis = styled.div`
  grid-column: 1 / 3;
  margin-top: -1px;
`;

const TabBar = styled.nav`
  height: 20px;
  flex: none;
  display: flex;
  align-items: flex-start;
  padding-left: 1px;
  background: #f0f0f0;
  border-top: 1px solid #000;
  border-bottom: 1px solid #fff;
`;

const Tab = styled.span<{ $w: number; $on?: boolean; $bar?: boolean; $nudge?: number }>`
  width: ${(p) => p.$w}px;
  height: 18px;
  text-align: center;
  font-size: 12.3px;
  line-height: 19px;
  white-space: pre;
  text-indent: ${(p) => p.$nudge ?? 0}px;
  color: ${(p) => (p.$on ? '#000' : '#6d6d6d')};
  ${(p) =>
    p.$on &&
    css`
      margin-top: -1px;
      height: 19px;
      line-height: 21px;
      background: #fff;
      border: 1px solid #000;
      border-top: 0;
    `}
  ${(p) =>
    p.$bar &&
    css`
      background: linear-gradient(#707070, #707070) 100% 3px / 1px 13px no-repeat;
    `}
`;

const TabEdge = styled.i`
  width: 1px;
  height: 18px;
  background: #707070;
`;

const TabScroll = styled.svg`
  margin: 5px 8px 0 auto;
`;

const StatusBar = styled.footer`
  height: 23px;
  flex: none;
  display: grid;
  grid-template-columns: 1124px 135px 117px 82px 82px 78px 80px 77px 1fr;
  align-items: center;
  padding-top: 2px;
  background: #f0f0f0;
  border-bottom: 1px solid #2c5866;
`;

const StatusCell = styled.div<{ $first?: boolean }>`
  display: flex;
  align-items: center;
  height: 18px;
  padding-left: ${(p) => (p.$first ? 2 : 5)}px;
  gap: 4px;
  border-left: ${(p) => (p.$first ? '0' : '1px solid #a8a8a8')};
  font: 12.2px/18px 'Open Sans', 'Noto Sans CJK SC', sans-serif;
  letter-spacing: ${(p) => (p.$first ? '-0.15px' : '0')};
  color: #000;
`;

const TaskBar = styled.div`
  height: 39px;
  flex: none;
  display: flex;
  align-items: stretch;
  border-top: 1px solid #8fc4d4;
  overflow: hidden;
  background:
    linear-gradient(180deg, rgba(255, 255, 255, 0.18), rgba(255, 255, 255, 0) 8px),
    linear-gradient(90deg, rgba(20, 50, 65, 0.5) 0, rgba(20, 50, 65, 0.4) 46px, rgba(20, 50, 65, 0) 90px, rgba(20, 50, 65, 0) 1550px, rgba(20, 50, 65, 0.45) 1590px, rgba(20, 50, 65, 0.5)),
    linear-gradient(100deg, #2f8aa3 0, #3a95ae 340px, #2c88a2 480px, #2c88a2 640px, #3e9ab3 690px, #3b97b0 800px, #2d89a4 900px, #2c87a1 980px, #3d99b2 1060px, #2c88a2 1130px, #2c88a2 1200px, #3d99b2 1240px, #3a96af 1330px, #2c87a2 1370px, #2c87a2 100%);
`;

const TaskSlot = styled.div<{ $w: number; $lit?: number }>`
  width: ${(p) => p.$w}px;
  flex: none;
  display: flex;
  align-items: center;
  justify-content: center;
  overflow: hidden;
  ${(p) =>
    p.$lit &&
    css`
      border: 1px solid rgba(20, 60, 75, 0.8);
      border-top: 0;
      border-radius: 3px;
      box-shadow: inset 0 0 0 1px rgba(255, 255, 255, 0.55);
      background: linear-gradient(120deg, rgba(255, 255, 255, ${p.$lit}), rgba(255, 255, 255, ${p.$lit * 0.5}) 55%, rgba(255, 255, 255, ${p.$lit * 0.8}));
    `}
`;

const Ps = styled.div`
  width: 30px;
  height: 27px;
  margin-top: -4px;
  font: 600 14px/25px 'Open Sans', sans-serif;
  text-align: center;
  color: #d8eeff;
  background: linear-gradient(180deg, #28477f, #12285c);
  border: 1px solid #173367;
`;

const Tray = styled.div`
  margin-left: auto;
  display: flex;
  align-items: center;
`;

const Clock = styled.div`
  width: 75px;
  font: 12.3px/18px 'Open Sans', sans-serif;
  text-align: center;
  color: #fff;
`;

const Peek = styled.div`
  width: 15px;
  margin-left: 3px;
  align-self: stretch;
  border: 1px solid #1c4656;
  box-shadow: inset 1px 1px 0 rgba(255, 255, 255, 0.5);
  background: linear-gradient(120deg, #7fa9b6, #2f6a7e 50%, #4d8496);
`;

const ImeBar = styled.div`
  position: absolute;
  left: 1404px;
  top: 149px;
  display: flex;
  align-items: center;
`;

const ImeBody = styled.div`
  display: flex;
  align-items: center;
  width: 175px;
  height: 26px;
  margin: 4px 0 0 -4px;
  padding-left: 5px;
  background: #fff;
  border: 1px solid #b4c8e0;
  border-radius: 2px;
`;

const ImeItem = styled.span`
  width: 24px;
  display: flex;
  justify-content: center;
  font: 700 14.5px/22px 'Noto Sans CJK SC', sans-serif;
  color: #0a6fd8;
`;

const Pointer = styled.svg`
  position: absolute;
  left: -2px;
  top: 0;
`;

/* ------------------------------------------------------------------ */
/* Parts                                                               */
/* ------------------------------------------------------------------ */

const ArrowShape = () => <path d="M1 0V16L5 12.5 7.5 18 10.5 16.8 8 11.5H13z" fill="#fff" stroke="#000" strokeWidth="1" />;

const ChartIcon = () => (
  <svg width="15" height="15" viewBox="0 0 15 15">
    <rect x="1" y="1" width="10" height="9" fill="#eaf4ff" stroke="#4d8fe0" />
    <path d="M1 2h10" stroke="#4d8fe0" strokeWidth="2" strokeDasharray="2 1" />
    <path d="M3 7l1-2 1 1" fill="none" stroke="#4d8fe0" />
    <rect x="4" y="5" width="10" height="9" fill="#fff" stroke="#4d8fe0" />
    <path d="M4 6h10" stroke="#4d8fe0" strokeWidth="2" />
    <path d="M5.500 9l1.300 3 1.400-3 1.300 3 1.300-3 1 2" fill="none" stroke="#3c7fd6" strokeWidth=".9" />
  </svg>
);

const MinGlyph = () => (
  <svg width="13" height="11" viewBox="0 0 13 11">
    <rect x="1.500" y="6" width="10" height="3.500" rx=".5" fill="#fff" stroke="#4e5868" />
  </svg>
);
const MaxGlyph = () => (
  <svg width="13" height="11" viewBox="0 0 13 11">
    <rect x="1.500" y="1" width="10" height="8.500" rx="1" fill="#fff" stroke="#4e5868" />
    <rect x="4.500" y="4" width="4" height="2.500" fill="#c9d5e2" stroke="#4e5868" />
  </svg>
);
const CloseGlyph = () => (
  <svg width="13" height="11" viewBox="0 0 13 11">
    <path d="M3.200 2L9.800 9M9.800 2L3.200 9" stroke="#4e5868" strokeWidth="4.200" />
    <path d="M3.400 2.200L9.600 8.800M9.600 2.200L3.400 8.800" stroke="#fff" strokeWidth="2.200" />
  </svg>
);

interface LabelProps {
  x: number;
  y: number;
  w: number;
  fill?: string;
  size?: number;
  children: string;
}
const Label = ({ x, y, w, fill = '#fff', size = 9.8, children }: LabelProps) => (
  <text x={x} y={y} fontSize={size} fill={fill} textLength={w} lengthAdjust="spacingAndGlyphs">
    {children}
  </text>
);

const Lines = ({ curves, base }: { curves: Curve[]; base: number }) => (
  <>
    {curves.map((c) => (
      <polyline key={c.color} points={curvePoints(c, base)} fill="none" stroke={c.color} strokeWidth={c.width} />
    ))}
  </>
);

const PricePane = ({ data }: { data: ChartData }) => {
  const shapes = candleShapes(data.candles, data.yBase);
  const symbolWidth = data.symbol.endsWith('Daily') ? 65 : 55;
  return (
    <Pane>
      <svg width="889" height="263">
        <g shapeRendering="crispEdges">
          <rect x="0" y={data.priceY} width="889" height="1" fill="#778899" />
          <path d={shapes.r} fill="#ff0000" />
          <path d={shapes.g} fill="#00f000" />
          <Lines curves={data.curves} base={data.yBase} />
          <path d="M704 0h11l-5.500 5z" fill="#778899" />
        </g>
        <path d="M3 6h7L6.500 10z" fill="#fff" />
        <Label x={15.500} y={11} w={symbolWidth}>{data.symbol}</Label>
        <Label x={symbolWidth + 21.500} y={11} w={data.headerWidth}>{data.header}</Label>
        <text x="732.500 746.500 763 774.500 788.500" y={data.timerY} fontSize="27" fill="#ffff00" style={{ fontFamily: "'Liberation Serif', serif" }}>
          00:02
        </text>
      </svg>
    </Pane>
  );
};

const PriceAxis = ({ data }: { data: ChartData }) => (
  <Axis>
    <svg width="45" height="265">
      {data.prices.map((p, i) => (
        <g key={p}>
          <rect x="0" y={30 + 33 * i} width="2" height="1" fill="#fff" />
          <Label x={5} y={34 + 33 * i} w={33}>{p}</Label>
        </g>
      ))}
      <rect x="1" y={data.priceY - 4} width="41" height="11" fill="#fff" />
      <Label x={5} y={data.priceY + 5} w={33} fill="#000">1.56452</Label>
    </svg>
  </Axis>
);

const OsmaPane = ({ data }: { data: ChartData }) => {
  const bars = osmaShapes(data.osma, data.osmaZero);
  return (
    <Pane>
      <svg width="889" height="130">
        <g shapeRendering="crispEdges">
          {Object.entries(bars).map(([color, d]) => (
            <path key={color} d={d} fill={color} />
          ))}
          <Lines curves={data.osmaCurves} base={data.osmaBase} />
        </g>
        <Label x={4} y={12} w={data.osmaLabelWidth}>{`MACD_OsMA [CurrTF] (12,26,9) ${data.osmaLabel}`}</Label>
      </svg>
    </Pane>
  );
};

const OsmaAxis = ({ data }: { data: ChartData }) => (
  <Axis>
    <svg width="45" height="132">
      <rect x="0" y="2" width="1" height="1" fill="#fff" />
      <rect x="0" y={data.osmaZero + 1} width="2" height="1" fill="#fff" />
      <rect x="0" y="130" width="1" height="1" fill="#fff" />
      <Label x={3} y={10.500} w={43}>{data.osmaTop}</Label>
      <Label x={3} y={data.osmaZero + 5} w={18}>0.00</Label>
      <Label x={3} y={128} w={46}>{data.osmaBottom}</Label>
    </svg>
  </Axis>
);

const ChartWindow = ({ data, active }: { data: ChartData; active?: boolean }) => (
  <Frame $active={active}>
    <TitleBar $active={active}>
      <ChartIcon />
      <TitleText $active={active}>{data.symbol}</TitleText>
      <Buttons>
        <WindowButton $tone={active ? 'active' : 'plain'}><MinGlyph /></WindowButton>
        <WindowButton $tone={active ? 'active' : 'plain'}><MaxGlyph /></WindowButton>
        <WindowButton $tone={active ? 'close' : 'plain'}><CloseGlyph /></WindowButton>
      </Buttons>
    </TitleBar>
    <Client>
      <PricePane data={data} />
      <PriceAxis data={data} />
      <OsmaPane data={data} />
      <OsmaAxis data={data} />
      <TimeAxis>
        <svg width="936" height="20">
          {data.times.map((t, i) => (
            <g key={t}>
              <rect x={1 + 64 * i} y="0" width="1" height="3" fill="#fff" />
              <Label x={64 * i} y={12} w={dateWidth(t)}>{t}</Label>
            </g>
          ))}
        </svg>
      </TimeAxis>
    </Client>
  </Frame>
);

const SogouMark = ({ size }: { size: number }) => (
  <svg width={size} height={size} viewBox="0 0 32 32">
    <path d="M1 6Q13 4 25 1q3 12 6 22 0 3-4 4L9 31q-3 0-4-3Q3 16 1 6z" fill="#f4511e" />
    <path d="M24 8Q13 6 8 11q-3 5 5 5 11-1 11 3-1 6-16 4" fill="none" stroke="#fff" strokeWidth="4.400" strokeLinecap="round" />
  </svg>
);

const ImeToolbar = () => (
  <ImeBar>
    <SogouMark size={32} />
    <ImeBody>
      <ImeItem>中</ImeItem>
      <ImeItem>
        <svg width="12" height="12" viewBox="0 0 12 12">
          <circle cx="3" cy="3.500" r="1.800" fill="none" stroke="#0a6fd8" strokeWidth="1.300" />
          <path d="M8 5h3.500v3Q11 11 8.500 11.500L9 8.500H8z" fill="#0a6fd8" />
        </svg>
      </ImeItem>
      <ImeItem>
        <svg width="16" height="14" viewBox="0 0 16 14">
          <rect x="1" y="1.500" width="14" height="11" rx="1" fill="none" stroke="#0a6fd8" strokeWidth="2" />
          <path d="M3 4.500h10M3 7h10" stroke="#0a6fd8" strokeWidth="1.500" strokeDasharray="2 1" />
          <path d="M4.500 10h7" stroke="#0a6fd8" strokeWidth="1.500" />
        </svg>
      </ImeItem>
      <ImeItem>
        <svg width="16" height="16" viewBox="0 0 16 16">
          <circle cx="7" cy="4.500" r="4" fill="#0a6fd8" />
          <path d="M1 15.500V12q0-3 4-3h5v6.500z" fill="#0a6fd8" />
          <rect x="7.500" y="8.500" width="8" height="6.500" fill="#fff" stroke="#0a6fd8" />
          <path d="M9.500 10.500v3M11.500 10.500h2v3h-2z" fill="none" stroke="#0a6fd8" />
        </svg>
      </ImeItem>
      <ImeItem>
        <svg width="16" height="16" viewBox="0 0 16 16" fill="none" stroke="#0a6fd8" strokeWidth="1.800">
          <path d="M2.500 1l8 10M13 1L5 11" />
          <circle cx="4" cy="12.500" r="2.400" />
          <circle cx="12" cy="12.500" r="2.400" />
        </svg>
      </ImeItem>
      <ImeItem>简</ImeItem>
      <ImeItem>
        <svg width="16" height="16" viewBox="0 0 16 16" fill="none" stroke="#0a6fd8" strokeWidth="1.800">
          <circle cx="7.500" cy="7.500" r="6" />
          <path d="M11 11l3.500 3.500" />
        </svg>
      </ImeItem>
    </ImeBody>
  </ImeBar>
);

const StartOrb = () => (
  <svg width="38" height="38" viewBox="0 0 38 38">
    <defs>
      <radialGradient id="orb" cx="50%" cy="95%" r="90%">
        <stop offset="0" stopColor="#5be3ff" />
        <stop offset=".4" stopColor="#1c6fae" />
        <stop offset=".8" stopColor="#1d4a78" />
        <stop offset="1" stopColor="#9cc0d8" />
      </radialGradient>
    </defs>
    <circle cx="19" cy="19" r="18" fill="url(#orb)" stroke="#18384c" />
    <path d="M3 16Q6 3 19 2.500 32 3 35 16 19 9 3 16z" fill="#cfe2ee" opacity=".65" />
    <path d="M11 11q4-3 8-.5L17.500 18q-4-2-8 .3z" fill="#f0652a" />
    <path d="M20.500 11q4 2.500 8.500 0L27.500 18.500q-4 2-8.500-.3z" fill="#8cc63f" />
    <path d="M9 20q4-2.500 8.200 0L15.700 27.500q-4-2.300-8.200.2z" fill="#2f9be8" />
    <path d="M18.700 20.300q4 2.400 8.500.1L25.500 28q-4 2-8.500-.4z" fill="#fdc82f" />
  </svg>
);

const MonitorIcon = () => (
  <svg width="32" height="26" viewBox="0 0 32 26">
    <rect x=".5" y="1" width="31" height="23" fill="#1b4fc0" stroke="#c8d4dc" strokeWidth="1.500" />
    <path d="M1.500 2h29L4 20H1.500z" fill="#5f9af2" opacity=".75" />
    <rect x="1.500" y="20" width="29" height="3" fill="#0d2a5e" />
    <circle cx="4.500" cy="20.500" r="2" fill="#52c8e8" />
  </svg>
);

const TraderIcon = () => (
  <svg width="32" height="32" viewBox="0 0 32 32">
    <rect x="1" y="1" width="18" height="18" fill="#eef7ff" stroke="#4aa0d8" />
    <rect x="1" y="1" width="18" height="3" fill="#58b2e6" />
    <path d="M4 8v8M7 7v7M10 9v4" stroke="#3f83d8" />
    <rect x="17" y="15" width="14" height="13" fill="#e6f3ff" stroke="#4aa0d8" />
    <rect x="13" y="6" width="15" height="18" fill="#fff" stroke="#4aa0d8" />
    <rect x="13" y="6" width="15" height="3" fill="#58b2e6" />
    <path d="M15 18l2-6 2 7 2-7 2 5 2-5" fill="none" stroke="#4a86e0" />
    <circle cx="8" cy="14" r="5" fill="#b55a17" />
    <circle cx="8" cy="16" r="4" fill="#f6b26b" />
    <path d="M1 30q0-9 7-9t8 9z" fill="#5aa62c" stroke="#3c7a1c" />
    <path d="M6 21h4l-2 6z" fill="#fff" />
  </svg>
);

const EagleIcon = () => (
  <svg width="32" height="32" viewBox="0 0 32 32">
    <circle cx="16" cy="16" r="15" fill="#f08020" />
    <path d="M17 3Q29 8 26 20q-3 8-10 10 6-9 0-13-4-2-8 2-1-6 4-9l7-4q-2-1-2-3z" fill="#fff" />
    <path d="M22 6q10 6 8 14-3 8-9 10 6-9 4-14-4 2-5-1 4-2 2-9z" fill="#fbd9ab" />
  </svg>
);

const WeChatIcon = () => (
  <svg width="33" height="28" viewBox="0 0 33 28">
    <path d="M12 1C5 1 1 5 1 10.500c0 3 1.500 5.500 4 7L4 21l4.500-2q2 .6 4 .5C19 19 24 16 24 10.500 24 5 19 1 12 1z" fill="#1fd76b" />
    <ellipse cx="22.500" cy="18" rx="9.500" ry="8" fill="#f0f0f0" />
    <path d="M27 24l3.500 3-.5-5z" fill="#f0f0f0" />
    <circle cx="8.500" cy="8" r="1.500" fill="#10733b" />
    <circle cx="16" cy="8" r="1.500" fill="#10733b" />
    <circle cx="19.500" cy="16" r="1.200" fill="#777" />
    <circle cx="25.500" cy="16" r="1.200" fill="#777" />
  </svg>
);

const NotepadIcon = () => (
  <svg width="32" height="30" viewBox="0 0 32 30">
    <path d="M12 2L28 4 23 29 2 24z" fill="#a9d3dc" stroke="#e8f5f8" />
    <path d="M28 4l2 1-4 23-3 1z" fill="#b79a62" />
    <path d="M12 2L2 24l6 1L20 3z" fill="#d6eef3" opacity=".8" />
    <path d="M12 3l16 2" stroke="#687a80" strokeWidth="3" strokeDasharray="1.500 1" />
    <path d="M10 11l15 2M8 15l16 2M7 19l16 2" stroke="#79b2bf" strokeWidth=".7" />
  </svg>
);

const BookIcon = () => (
  <svg width="26" height="28" viewBox="0 0 30 28" preserveAspectRatio="none">
    <path d="M3 7q4-7 8-1 4-6 8 0 5-5 8 1v6q-6 4-11 2-6 2-13-1z" fill="#54a6a4" />
    <path d="M6 5q3 3 1 8M12 4q-2 5 1 10M17 4q3 5 0 10M23 5q-3 3-1 8M5 9q5-2 10 1 5-3 10-1" stroke="#1f5a60" fill="none" />
    <path d="M9 7l3 2M18 7l3 2" stroke="#cdeeee" strokeWidth="1.500" />
    <path d="M2 20h26" stroke="#1d2b30" strokeWidth="3" strokeDasharray="2.500 .8 1.500 .7" />
    <path d="M1 25h28" stroke="#3a484c" strokeWidth="1.800" strokeDasharray="1.500 1.200 1 .8" />
  </svg>
);

const BluePenIcon = ({ w, h }: { w: number; h: number }) => (
  <svg width={w} height={h} viewBox="0 0 32 32" preserveAspectRatio="none">
    <rect width="32" height="32" rx="6" fill="#3f8cff" />
    <path d="M9 24l1-9q3-5 8-8 6 2 6 8l-7 9q-2 1-4 0z" fill="#fff" />
  </svg>
);

const WheelIcon = () => (
  <svg width="34" height="34" viewBox="0 0 34 34">
    <rect width="16" height="16" y="1" fill="#76b7d7" />
    <rect x="16" y="1" width="16" height="16" fill="#7fc88c" />
    <rect y="17" width="16" height="15" fill="#f6cf9c" />
    <rect x="16" y="17" width="16" height="15" fill="#b8c0bc" />
    <circle cx="16" cy="17" r="14" fill="#e6e6cf" />
    <path d="M16 17V3A14 14 0 0 1 30 17z" fill="#bfe3bd" />
    <path d="M16 17H2a14 14 0 0 0 14 14z" fill="#ffe7c0" />
    <path d="M0 2l5-1 12 14-3 3z" fill="#c8353a" />
    <circle cx="17" cy="17" r="4" fill="#f0141e" />
    <g transform="translate(17 17) scale(.9)"><ArrowShape /></g>
  </svg>
);

const TrayIconSet = styled.svg`
  margin-top: 5px;
`;

const TrayIcons = () => (
  <TrayIconSet width="235" height="34" viewBox="0 0 235 34">
    <path d="M5 6l13-2 2 15-12 2q-2-8-3-15z" fill="#f4511e" />
    <path d="M16 8q-5-2-7 1 0 3 3 3 4 1 3 4-2 2-6 0" fill="none" stroke="#fff" strokeWidth="2" />
    <circle cx="34" cy="12" r="7" fill="#1b2fa5" stroke="#c8d4ea" />
    <path d="M31.500 10q.5-3 3-2.500 3 .8 1.500 3-2 1.200-2 2.500M34 15v1.500" fill="none" stroke="#fff" strokeWidth="1.500" />
    <path d="M55.500 7.500h4v-4h-4v3" fill="none" stroke="#fff" />
    <rect x="53.500" y="6.500" width="4" height="3" fill="none" stroke="#fff" />
    <path d="M53.500 16h5L56 19z" fill="#fff" />
    <rect x="70" y="7" width="15" height="16" rx="2" fill="#2f7df0" />
    <path d="M74 19l1-6 5-4 1 5-4 5z" fill="#fff" />
    <path d="M94 9q7 1 7-1 0 2 7 1-1 10-7 15-6-5-7-15z" fill="#fff" />
    <path d="M96 11q5 0 5-1 0 1 5 1-1 7-5 11-4-4-5-11z" fill="#2a7be4" />
    <path d="M98 14h6l-3 5z" fill="#fff" />
    <rect x="119" y="8" width="14" height="15" fill="#2f88cf" stroke="#dff" />
    <path d="M122 11h3v4h-3zM127 11h4v4h-4M122 18h8M124 21h6" stroke="#e8f7ff" fill="none" />
    <path d="M143 13h4l5-6v17l-5-6h-4z" fill="#e6a58c" stroke="#7c3520" strokeWidth=".8" />
    <path d="M154 10q3 5 0 10M157 8q4 7 0 14" stroke="#f2c0a8" fill="none" />
    <path d="M168 8h5v8h3v7h-8z" fill="#a9b2b8" stroke="#58656c" />
    <circle cx="176.500" cy="20" r="4.500" fill="#25a22e" />
    <path d="M174 20l2 2 3-4" stroke="#fff" fill="none" strokeWidth="1.500" />
    <path d="M191 13h3l5-6v16l-5-5h-3z" fill="#fff" />
    <circle cx="200.500" cy="20" r="4.500" fill="#fff" stroke="#d22b2b" strokeWidth="2" />
    <path d="M197.500 17l6 6" stroke="#d22b2b" strokeWidth="2" />
    <path d="M216 21v3M219 18.500V24M222 15.500V24M225 12V24M228 9V24" stroke="#fff" strokeWidth="2" />
  </TrayIconSet>
);

const TrafficIcon = () => (
  <svg width="24" height="15" viewBox="0 0 24 15" shapeRendering="crispEdges">
    {[0, 1, 2, 3, 4, 5, 6, 7].map((i) => (
      <g key={i}>
        <rect x={i * 3} y="1" width="2" height={11 - i} fill="#7d8f1e" />
        <rect x={i * 3} y={11 - i} width="2" height={3 + i} fill="#1d4a63" />
      </g>
    ))}
  </svg>
);

/* ------------------------------------------------------------------ */

export default function App() {
  return (
    <Screen>
      <GlobalStyle />
      <Workspace>
        <ChartWindow data={H1} />
        <ChartWindow data={H1} active />
        <ChartWindow data={H4} />
        <ChartWindow data={DAILY} />
      </Workspace>

      <TabBar>
        <TabEdge />
        <Tab $w={97} $bar $nudge={3}>EURAUD,H1</Tab>
        <Tab $w={92} $nudge={-2}>EURAUD,H4</Tab>
        <Tab $w={91} $on $nudge={-1}>EURAUD,H1</Tab>
        <Tab $w={105} $bar $nudge={-2}>EURAUD,Daily</Tab>
        <TabScroll width="26" height="8">
          <path d="M4.500 0v8L1 4zM20 0v8l3.500-4z" fill="#8a8a8a" />
        </TabScroll>
      </TabBar>

      <StatusBar>
        <StatusCell $first>寻求帮助,请按F1键</StatusCell>
        <StatusCell>欧澳</StatusCell>
        <StatusCell />
        <StatusCell />
        <StatusCell />
        <StatusCell />
        <StatusCell />
        <StatusCell />
        <StatusCell>
          <TrafficIcon />
          15/1 kb
        </StatusCell>
      </StatusBar>

      <TaskBar>
        <TaskSlot $w={54}><StartOrb /></TaskSlot>
        <TaskSlot $w={68}><MonitorIcon /></TaskSlot>
        <TaskSlot $w={58}><TraderIcon /></TaskSlot>
        <TaskSlot $w={66}><EagleIcon /></TaskSlot>
        <TaskSlot $w={58}><WeChatIcon /></TaskSlot>
        <TaskSlot $w={65}><NotepadIcon /></TaskSlot>
        <TaskSlot $w={60} $lit={0.7}><BookIcon /></TaskSlot>
        <TaskSlot $w={2} />
        <TaskSlot $w={59} $lit={0.35}><BluePenIcon w={32} h={31} /></TaskSlot>
        <TaskSlot $w={66}><WheelIcon /></TaskSlot>
        <TaskSlot $w={58}><Ps>Ps</Ps></TaskSlot>
        <Tray>
          <TrayIcons />
          <Clock>
            5:57
            <br />
            2022/1/3
          </Clock>
          <Peek />
        </Tray>
      </TaskBar>

      <ImeToolbar />
      <Pointer width="16" height="20"><ArrowShape /></Pointer>
    </Screen>
  );
}
